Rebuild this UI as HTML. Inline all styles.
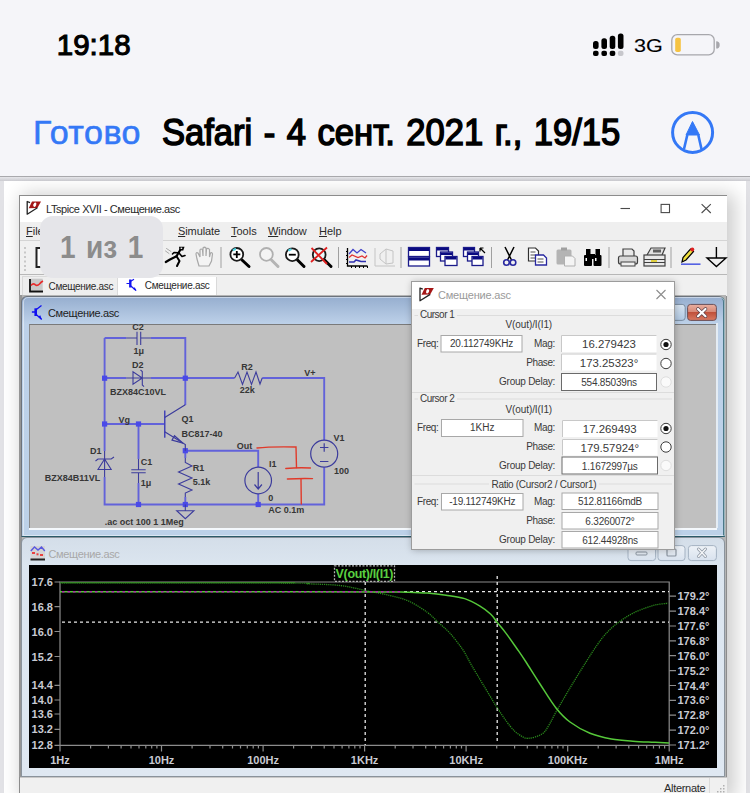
<!DOCTYPE html>
<html><head><meta charset="utf-8">
<style>
*{margin:0;padding:0;box-sizing:border-box}
html,body{width:750px;height:793px;overflow:hidden;background:#f5f5f9;font-family:"Liberation Sans",sans-serif}
.a{position:absolute}
.t{position:absolute;white-space:nowrap;line-height:1}
svg{position:absolute;overflow:visible}
</style></head><body>
<!-- iOS status bar -->
<div class="t" style="left:56.8px;top:30px;font-size:29.5px;color:#000;-webkit-text-stroke:1.1px #000;transform:scaleX(1.0);transform-origin:0 0">19:18</div>
<svg style="left:0;top:0" width="750" height="180">
 <g fill="#000">
  <rect x="593" y="41" width="5.6" height="8" rx="2.5"/><rect x="593" y="50.8" width="5.6" height="5.2" rx="2"/>
  <rect x="601.4" y="38.2" width="5.6" height="10.8" rx="2.5"/><rect x="601.4" y="50.8" width="5.6" height="5.2" rx="2"/>
  <rect x="609.7" y="35.8" width="5.6" height="13.2" rx="2.5"/><rect x="609.7" y="50.8" width="5.6" height="5.2" rx="2"/>
  <rect x="617.9" y="33.4" width="5.6" height="15.6" rx="2.5"/><rect x="617.9" y="50.8" width="5.6" height="5.2" rx="2" fill="#c7c7cc"/>
 </g>
 <rect x="671.8" y="34.7" width="42.4" height="20.2" rx="5.5" fill="none" stroke="#a7a7ac" stroke-width="1.3"/>
 <rect x="675.2" y="37.7" width="5.6" height="14.3" rx="1.8" fill="#f6c342"/>
 <path d="M716.2 41.3 a3.5 3.6 0 0 1 0 7.2 z" fill="#a7a7ac"/>
 <circle cx="692.6" cy="132.4" r="20" fill="none" stroke="#3478f6" stroke-width="3"/>
 <path d="M692.5 121.5 L699.5 135 L686 135 Z" fill="#3478f6" stroke="#3478f6" stroke-width="1" stroke-linejoin="round"/>
 <path d="M687.3 135 L684 149 M698.3 135 L701.5 149" stroke="#3478f6" stroke-width="2.6" fill="none"/>
</svg>
<div class="t" style="left:634px;top:37px;font-size:18px;color:#000;transform:scaleX(1.2);transform-origin:0 0;-webkit-text-stroke:0.1px #000">3G</div>
<!-- nav -->
<div class="t" style="left:33px;top:115px;font-size:34px;color:#3478f6;letter-spacing:0.5px;-webkit-text-stroke:0.6px #3478f6">Готово</div>
<div class="t" style="left:162px;top:115px;font-size:36px;color:#000;word-spacing:2px;-webkit-text-stroke:1.5px #000;transform:scaleX(0.96);transform-origin:0 0">Safari - 4 сент. 2021 г., 19/15</div>
<!-- separator -->
<div class="a" style="left:0;top:176px;width:750px;height:1px;background:#a9a9ad"></div>
<div class="a" style="left:0;top:177px;width:750px;height:616px;background:#e2e2e6"></div><div class="a" style="left:0;top:177px;width:750px;height:4px;background:linear-gradient(#e6e6ea,#cbcbd0)"></div>
<div class="a" style="left:4px;top:181px;width:742px;height:612px;background:#fff"></div>
<!-- LTspice window -->
<div class="a" style="left:19px;top:195px;width:708px;height:600px;box-shadow:5px 2px 18px 3px rgba(0,0,0,0.2)"></div>
<div class="a" style="left:19px;top:195px;width:708px;height:598px;background:#f0f0f0;border:1px solid #8c8c8c;border-bottom:none"></div>
<div class="a" style="left:20px;top:196px;width:707px;height:26px;background:#fff"></div>
<svg style="left:0;top:0" width="750" height="240" viewBox="0 0 750 240">
<g transform="translate(-392.8,-86.6)">
 <path d="M421.5 294.8 L424.8 288 H433.8 L430.2 294.6 Z" fill="#a41616"/>
 <ellipse cx="427.6" cy="291.3" rx="1.4" ry="2.3" fill="#fff" transform="rotate(20 427.6 291.3)"/>
 <path d="M423.6 288.3 L425.2 288.3" stroke="#fff" stroke-width="0"/>
 <path d="M422.8 289.2 L420 288.1 V300.8 L430.2 294.4" fill="none" stroke="#222" stroke-width="1.3" stroke-linejoin="round"/>
</g>
 <path d="M620.5 208.5 H630" stroke="#4a4a4a" stroke-width="1.1"/>
 <rect x="661.1" y="204.4" width="8.4" height="8.2" fill="none" stroke="#4a4a4a" stroke-width="1.1"/>
 <path d="M701.6 204.2 L710.8 213 M710.8 204.2 L701.6 213" stroke="#4a4a4a" stroke-width="1.1"/>
</svg>
<div class="t" style="left:46px;top:203.5px;font-size:11px;color:#2a2a2a;letter-spacing:-0.42px">LTspice XVII - Смещение.asc</div>
<!-- menubar -->
<div class="a" style="left:20px;top:222px;width:707px;height:18.5px;background:#efefef;border-bottom:1px solid #d4d4d4"></div>
<div class="t" style="left:26px;top:226px;font-size:11px;color:#2a2a2a"><u>F</u>ile</div>
<div class="t" style="left:178px;top:226px;font-size:11px;color:#2a2a2a;letter-spacing:-0.1px"><u>S</u>imulate</div>
<div class="t" style="left:231px;top:226px;font-size:11px;color:#2a2a2a"><u>T</u>ools</div>
<div class="t" style="left:268px;top:226px;font-size:11px;color:#2a2a2a;letter-spacing:-0.1px"><u>W</u>indow</div>
<div class="t" style="left:319px;top:226px;font-size:11px;color:#2a2a2a"><u>H</u>elp</div>
<!-- toolbar -->
<div class="a" style="left:20px;top:241px;width:707px;height:34px;background:#f0f0f0;border-bottom:1px solid #b8b8b8"></div>
<svg style="left:0;top:0" width="750" height="300" viewBox="0 0 750 300">
 <!-- grip -->
 <g fill="#c8c8c8"><rect x="24" y="247" width="2" height="2"/><rect x="24" y="251.5" width="2" height="2"/><rect x="24" y="256" width="2" height="2"/><rect x="24" y="260.5" width="2" height="2"/><rect x="24" y="265" width="2" height="2"/><rect x="24" y="269" width="2" height="2"/></g>
 <rect x="36.5" y="248" width="14" height="19" fill="#fff" stroke="#222" stroke-width="2"/>
 <!-- running man -->
 <g stroke="#000" stroke-linecap="round" stroke-linejoin="round" fill="none">
  <path d="M180.5 249.5 L176.5 256.2 L170 259.5 L165.8 262" stroke-width="2.2"/>
  <path d="M176.5 256.2 L179.5 261 L177 266" stroke-width="2"/>
  <path d="M179 253 L182 256.5 L185 255.5" stroke-width="1.6"/>
  <path d="M178.5 252.8 L174 252.5 L172.5 254" stroke-width="1.6"/>
  <path d="M166.5 248.5 L171 251.5 M165.5 251 L169 253.5" stroke="#a0a0a0" stroke-width="0.9"/>
 </g>
 <path d="M179 246.8 h5.5 l-1.2 3.8 h-3.8 z" fill="#000"/>
 <rect x="180.6" y="247.6" width="1.6" height="1.3" fill="#fff"/>
 <!-- hand -->
 <path d="M199 266 L197 259 L196 254 Q196 252 198 253 L200 257 L200 250 Q201 248 202.5 250 L203 256 L203 248 Q204.5 246.5 206 248 L206 256 L206.5 249 Q208 247.5 209.5 249.5 L209.5 257 L210.5 253 Q212 252 212.5 254 L211.5 261 L209 266 Z" fill="#f4f4f4" stroke="#a8a8a8" stroke-width="1.2"/>
 <rect x="220.5" y="247" width="1" height="21" fill="#a0a0a0"/>
 <!-- zoom in -->
 <line x1="242" y1="260" x2="249" y2="266.5" stroke="#000" stroke-width="3" stroke-linecap="round"/>
 <circle cx="236.8" cy="254.4" r="6.4" fill="#fff" stroke="#1a1a1a" stroke-width="1.8"/>
 <path d="M233 250.5 a5 5 0 0 1 3 -1.5" stroke="#50d8e8" stroke-width="2" fill="none"/>
 <path d="M233.3 254.4 h7 M236.8 250.9 v7" stroke="#000" stroke-width="1.8"/>
 <!-- zoom full gray -->
 <line x1="271.5" y1="260" x2="278" y2="266.5" stroke="#b4b4b4" stroke-width="3" stroke-linecap="round"/>
 <circle cx="266.4" cy="254.4" r="6.4" fill="#f4f4f4" stroke="#b0b0b0" stroke-width="1.8"/>
 <!-- zoom out -->
 <line x1="297.5" y1="260" x2="304" y2="266.5" stroke="#000" stroke-width="3" stroke-linecap="round"/>
 <circle cx="292.3" cy="254.7" r="6.4" fill="#fff" stroke="#1a1a1a" stroke-width="1.8"/>
 <path d="M288.5 250.8 a5 5 0 0 1 3 -1.5" stroke="#50d8e8" stroke-width="2" fill="none"/>
 <path d="M288.8 254.7 h7" stroke="#000" stroke-width="1.8"/>
 <!-- zoom cancel -->
 <line x1="324.5" y1="260" x2="331" y2="266.5" stroke="#000" stroke-width="3" stroke-linecap="round"/>
 <circle cx="319.2" cy="254.7" r="6.4" fill="#e8fbfd" stroke="#1a1a1a" stroke-width="1.8"/>
 <path d="M311.5 248 L327 264 M327 247.5 L311 262" stroke="#e02020" stroke-width="1.8"/>
 <rect x="338" y="247" width="1" height="21" fill="#a0a0a0"/>
 <!-- chart -->
 <path d="M347.5 248 V266 H367.5" stroke="#000" stroke-width="1.3" fill="none"/>
 <g fill="#000"><rect x="346" y="251" width="2" height="1"/><rect x="346" y="255" width="2" height="1"/><rect x="346" y="259" width="2" height="1"/><rect x="346" y="263" width="2" height="1"/><rect x="351" y="266" width="1" height="2"/><rect x="355" y="266" width="1" height="2"/><rect x="359" y="266" width="1" height="2"/><rect x="363" y="266" width="1" height="2"/><rect x="367" y="266" width="1" height="2"/></g>
 <path d="M349 254 L353 249.5 L357 253 L361 249.5 L366 253" stroke="#4040c8" stroke-width="1.3" fill="none"/>
 <path d="M349 257.5 L352 255 L358 257.5 L362 256 L365 258 L367 255.5" stroke="#e03030" stroke-width="1.3" fill="none"/>
 <path d="M349 262 L354 262 L356 260 L361 261.5 L366 261.5" stroke="#3030b0" stroke-width="1.6" fill="none"/>
 <!-- gray icon -->
 <g stroke="#c4c4c4" stroke-width="1" fill="none"><path d="M375 248 V266 H395"/><path d="M380 254 L386 249 L393 251 L393 263 L386 264 L380 259 Z"/><path d="M386 249 V264"/></g>
 <rect x="400.5" y="247" width="1" height="21" fill="#a0a0a0"/>
 <!-- tile -->
 <g stroke="#1a1a8a" stroke-width="1.3" fill="#fff">
  <rect x="408.5" y="247.5" width="21" height="9"/><rect x="408.5" y="257" width="21" height="9"/>
 </g>
 <rect x="409" y="248" width="20" height="3" fill="#0a0a80"/><rect x="409" y="257.5" width="20" height="3" fill="#0a0a80"/>
 <!-- cascade -->
 <g stroke="#1a1a8a" stroke-width="1.3" fill="#fff">
  <rect x="436.5" y="247.5" width="12" height="9"/><rect x="440.5" y="252" width="12" height="9"/><rect x="445" y="256.5" width="12" height="9"/>
 </g>
 <rect x="437" y="248" width="11" height="2.5" fill="#0a0a80"/><rect x="441" y="252.5" width="11" height="2.5" fill="#0a0a80"/><rect x="445.5" y="257" width="11" height="2.5" fill="#0a0a80"/>
 <!-- arrange -->
 <g stroke="#1a1a8a" stroke-width="1.3" fill="#fff">
  <rect x="463.5" y="247.5" width="11" height="9"/><rect x="467.5" y="252" width="11" height="9"/><rect x="472" y="256.5" width="11" height="9"/>
 </g>
 <rect x="464" y="248" width="10" height="2.5" fill="#0a0a80"/><rect x="468" y="252.5" width="10" height="2.5" fill="#0a0a80"/><rect x="472.5" y="257" width="10" height="2.5" fill="#0a0a80"/>
 <path d="M480 248 L485 253 M480 248 h3.5 M480 248 v3.5" stroke="#000" stroke-width="1.2" fill="none"/>
 <rect x="491" y="247" width="1" height="21" fill="#a0a0a0"/>
 <!-- scissors -->
 <path d="M505 247 L511.5 260 M514 247 L507.5 260" stroke="#000" stroke-width="1.5"/>
 <circle cx="506.5" cy="262.5" r="2.8" fill="none" stroke="#2828a0" stroke-width="1.6"/>
 <circle cx="513" cy="262.5" r="2.8" fill="none" stroke="#2828a0" stroke-width="1.6"/>
 <!-- copy -->
 <path d="M528.5 248 h7 l3 3 v10 h-10 z" fill="#fff" stroke="#303030" stroke-width="1.2"/>
 <path d="M530.5 252 h5 M530.5 255 h5 M530.5 258 h5" stroke="#505050" stroke-width="1"/>
 <path d="M535.5 255 h8 l3 3 v7 h-11 z" fill="#fff" stroke="#2828a0" stroke-width="1.3"/>
 <path d="M537.5 259 h6 M537.5 262 h6" stroke="#505050" stroke-width="1"/>
 <!-- paste gray -->
 <rect x="556.5" y="249.5" width="15" height="15" rx="1.5" fill="#b4b4b4"/>
 <rect x="561" y="247.5" width="6" height="3" fill="#a0a0a0"/>
 <path d="M564.5 256 h8 l2.5 2.5 v7.5 h-10.5 z" fill="#f4f4f4" stroke="#b0b0b0" stroke-width="1"/>
 <!-- binoculars -->
 <g fill="#000">
  <rect x="584" y="255" width="8" height="11" rx="1"/><rect x="593.5" y="255" width="8" height="11" rx="1"/>
  <rect x="586" y="249" width="4.5" height="7"/><rect x="595.5" y="249" width="4.5" height="7"/>
  <rect x="590" y="254" width="5" height="5"/>
 </g>
 <g fill="#fff"><rect x="585.5" y="258" width="1.5" height="3"/><rect x="595" y="258" width="1.5" height="3"/></g>
 <rect x="608.5" y="247" width="1" height="21" fill="#a0a0a0"/>
 <!-- printer 1 -->
 <path d="M623 256 V249 h9 l2 2 v5" fill="#e8e8e8" stroke="#404040" stroke-width="1.2"/>
 <rect x="618.5" y="256" width="19" height="8" rx="2" fill="#d8d8d8" stroke="#404040" stroke-width="1.2"/>
 <rect x="621" y="262" width="14" height="4" fill="#f0f0f0" stroke="#404040" stroke-width="1"/>
 <!-- printer 2 -->
 <path d="M647 255 L651 248 h14 l-3 7" fill="#e0e0e0" stroke="#404040" stroke-width="1.2"/>
 <rect x="653" y="249.5" width="8" height="3" fill="#606060"/>
 <rect x="644" y="255" width="21" height="11" fill="#e8e8e8" stroke="#404040" stroke-width="1.2"/>
 <path d="M644 259.5 h21 M644 262.5 h21" stroke="#404040" stroke-width="1"/>
 <rect x="651" y="260" width="6" height="2" fill="#e0d040"/>
 <rect x="670.5" y="247" width="1" height="21" fill="#a0a0a0"/>
 <!-- pencil -->
 <path d="M682 262 L683 257.5 L690.5 249 L693.5 251.5 L686 260 Z" fill="#f0e040" stroke="#000" stroke-width="1.2"/>
 <circle cx="692.3" cy="249.6" r="2" fill="#e02020"/>
 <rect x="681" y="263.5" width="19.5" height="1.3" fill="#3040e0"/>
 <!-- ground -->
 <path d="M716.4 247 V258 M707 258 H726 L716.4 266.5 Z" stroke="#000" stroke-width="1.4" fill="none"/>
</svg>
<!-- tab strip -->
<div class="a" style="left:20px;top:275px;width:707px;height:21px;background:#f0f0f0"></div>
<div class="a" style="left:22px;top:276px;width:96px;height:19px;background:#eeeeee;border:1px solid #dadada;border-bottom:none"></div>
<div class="a" style="left:117.5px;top:277px;width:99px;height:18px;background:#fff;border-right:1px solid #dadada"></div>
<div class="t" style="left:48.5px;top:281.5px;font-size:10px;color:#2a2a2a;letter-spacing:-0.3px">Смещение.asc</div>
<div class="t" style="left:144.8px;top:280.5px;font-size:10px;color:#2a2a2a;letter-spacing:-0.3px">Смещение.asc</div>
<svg style="left:0;top:0" width="750" height="330" viewBox="0 0 750 330">
 <rect x="31" y="278.7" width="11.7" height="11.6" fill="#c8c8c8"/>
 <path d="M30 279 V291.5 H43" fill="none" stroke="#111" stroke-width="1.8"/>
 <path d="M31 285.5 Q33 283 35 284.5 Q37 286.5 39.5 284 Q41 282 43 281" fill="none" stroke="#e82a2a" stroke-width="1.6"/>
 <g stroke="#1414f0" fill="none">
  <path d="M130.3 279.5 V287.5" stroke-width="2.4"/>
  <path d="M126.5 283.5 H130.3 M130.3 281.5 L134 279.3 M130.3 285.5 L136 290.5" stroke-width="1.2"/>
 </g>
 <path d="M133 288.8 L136.5 291 L134.8 287.3 Z" fill="#1414f0"/>
</svg>
<!-- MDI -->
<div class="a" style="left:20px;top:295px;width:706px;height:482px;background:#b4b4b4"></div><div class="a" style="left:19px;top:295px;width:2.5px;height:482px;background:#959595"></div>
<!-- schematic window -->
<div class="a" style="left:21px;top:295.5px;width:704px;height:241px;background:linear-gradient(#96aecf,#bdd1e9 27px,#bcd1e8);border:1px solid #6c737c;border-right:2px solid #4a7888;border-bottom:1.5px solid #2a5a68;border-radius:6px 6px 0 0"></div>
<div class="a" style="left:22.5px;top:296.5px;width:702px;height:239px;border:1px solid rgba(255,255,255,0.45);border-radius:5px 5px 0 0"></div>
<div class="t" style="left:48px;top:308px;font-size:11px;color:#1e1e1e;letter-spacing:-0.35px">Смещение.asc</div>
<svg style="left:0;top:0" width="750" height="330" viewBox="0 0 750 330">
 <g stroke="#1010f0" fill="none">
  <path d="M35.7 308.3 V316" stroke-width="2.6"/>
  <path d="M31.9 312 H35.7 M35.7 310 L41.5 305.4 M35.7 314 L41.7 319.4" stroke-width="1.3"/>
 </g>
 <path d="M38 316.8 L41.9 319.6 L40.3 315.2 Z" fill="#1010f0"/>
 <rect x="687.6" y="304.4" width="28.8" height="16" rx="3" fill="url(#rb)" stroke="#6a5058" stroke-width="1"/>
 <defs><linearGradient id="rb" x1="0" y1="0" x2="0" y2="1"><stop offset="0" stop-color="#eab0a0"/><stop offset="0.45" stop-color="#d88a78"/><stop offset="0.5" stop-color="#c0503a"/><stop offset="1" stop-color="#d87a62"/></linearGradient>
 <linearGradient id="bb" x1="0" y1="0" x2="0" y2="1"><stop offset="0" stop-color="#d8e4f0"/><stop offset="0.5" stop-color="#c4d6ea"/><stop offset="1" stop-color="#b0c8e2"/></linearGradient></defs>
 <rect x="660" y="304.4" width="25.2" height="16" rx="3" fill="url(#bb)" stroke="#7a8ca0" stroke-width="1"/>
 <path d="M698 309 L705.5 316.2 M705.5 309 L698 316.2" stroke="#5a4048" stroke-width="3.6" stroke-linecap="round"/>
 <path d="M698 309 L705.5 316.2 M705.5 309 L698 316.2" stroke="#fff" stroke-width="2.2" stroke-linecap="round"/>
</svg>
<div class="a" style="left:29px;top:323.5px;width:687px;height:204px;background:#c0c0c0;border-top:1.5px solid #7a7a7a;border-left:1px solid #8a8a8a"></div><div class="a" style="left:716px;top:323px;width:2px;height:205px;background:#e4ecf4"></div>
<div class="a" style="left:28.5px;top:527.5px;width:688px;height:2px;background:#f4f8fc"></div>
<!-- plot window -->
<div class="a" style="left:21px;top:537px;width:704px;height:240px;background:linear-gradient(#d4dee9,#dbe5ef 27px,#dfe8f2);border:1px solid #8a939c;border-radius:6px 6px 0 0"></div>
<div class="t" style="left:48.5px;top:548.5px;font-size:11px;color:#a8a8a8;letter-spacing:-0.35px">Смещение.asc</div>
<svg style="left:0;top:0" width="750" height="793" viewBox="0 0 750 793">
 <rect x="30.5" y="546" width="14.5" height="14" fill="#d4d4d4"/>
 <path d="M30.8 551 L34.5 547 L38 550 L41.5 547 L44.8 551" fill="none" stroke="#5858e0" stroke-width="1.4"/>
 <g fill="#e84040"><rect x="32" y="552" width="3" height="2"/><rect x="36.5" y="553.3" width="2" height="2"/><rect x="40" y="554" width="3" height="2"/></g>
 <rect x="30.5" y="558.5" width="14.5" height="2" fill="#222"/>
 <defs><linearGradient id="gb" x1="0" y1="0" x2="0" y2="1"><stop offset="0" stop-color="#eef2f7"/><stop offset="1" stop-color="#d8e2ee"/></linearGradient></defs>
 <g fill="url(#gb)" stroke="#a4b2c2" stroke-width="1">
  <rect x="628" y="545.6" width="27.6" height="15" rx="3"/>
  <rect x="658" y="545.6" width="27" height="15" rx="3"/>
  <rect x="688.4" y="545.6" width="28" height="15" rx="3"/>
 </g>
 <rect x="636" y="552" width="11" height="3" rx="1" fill="none" stroke="#8a94a0" stroke-width="1"/>
 <rect x="667" y="549" width="9" height="7" rx="1" fill="none" stroke="#8a94a0" stroke-width="1.2"/>
 <path d="M698.5 549 L705.5 556.5 M705.5 549 L698.5 556.5" stroke="#8a94a0" stroke-width="3" stroke-linecap="round"/>
 <path d="M698.5 549 L705.5 556.5 M705.5 549 L698.5 556.5" stroke="#f4f6f8" stroke-width="1.6" stroke-linecap="round"/>
</svg>
<div class="a" style="left:29px;top:564.5px;width:687.5px;height:203.5px;background:#000"></div>
<!-- status bar -->
<div class="a" style="left:20px;top:776.5px;width:707px;height:17px;background:#f0f0f0;border-top:1px solid #c8c8c8"></div>
<div class="a" style="left:709px;top:778px;width:1px;height:15px;background:#dadada"></div>
<div class="t" style="left:664px;top:783px;font-size:11px;color:#2a2a2a;letter-spacing:-0.3px">Alternate</div>
<svg style="left:0;top:0" width="750" height="793" viewBox="0 0 750 793"><g fill="#b0b0b0"><rect x="723" y="785" width="1.5" height="1.5"/><rect x="720" y="788" width="1.5" height="1.5"/><rect x="723" y="788" width="1.5" height="1.5"/><rect x="717" y="791" width="1.5" height="1.5"/><rect x="720" y="791" width="1.5" height="1.5"/><rect x="723" y="791" width="1.5" height="1.5"/></g></svg>
<svg style="left:0;top:0" width="750" height="793" viewBox="0 0 750 793">
 <defs><clipPath id="cv"><rect x="29.5" y="324" width="687" height="203.5"/></clipPath></defs>
 <g clip-path="url(#cv)">
 <g stroke="#6262da" stroke-width="1.9" fill="none">
  <path d="M104.6 338 H126.3 M151 338 H185.3 V405"/>
  <path d="M104.6 338 V451 M104.6 477 V504.5 H324.2 V467.2 M324.2 440.2 V378 H262.2 M234.6 378 H151 M126.3 378 H104.6"/>
  <path d="M104.6 424 H164.7 M138.5 424 V459 M138.5 483 V504.5"/>
  <path d="M185.3 450.7 H258.2 V467 M258.2 494 V504.5"/>
  <path d="M185.3 450.7 V458 M185.3 497 V504.5"/>
 </g>
 <g fill="#4a4ae8">
  <rect x="102" y="375.6" width="5.2" height="5.2"/><rect x="182.7" y="375.6" width="5.2" height="5.2"/>
  <rect x="102" y="421.4" width="5.2" height="5.2"/><rect x="135.9" y="421.4" width="5.2" height="5.2"/>
  <rect x="135.9" y="501.9" width="5.2" height="5.2"/><rect x="182.7" y="501.9" width="5.2" height="5.2"/>
  <rect x="255.6" y="501.9" width="5.2" height="5.2"/><rect x="182.7" y="448.1" width="5.2" height="5.2"/>
 </g>
 <g stroke="#3c3c9c" stroke-width="1.1" fill="none">
  <!-- C2 -->
  <path d="M126.3 338 H137 M140.7 338 H151 M137 331.7 V345 M140.7 331.7 V345"/>
  <!-- D2 -->
  <path d="M126.3 378 H151 M133 371.7 V384.2 L142.3 378 Z M140.5 370 L142.3 371.5 V385 L144 386.7"/>
  <!-- D1 -->
  <path d="M104.6 451 V477 M98 469.5 H111.2 L104.6 459 Z M95.5 461 L98 459 H111.2 L114 457"/>
  <!-- C1 -->
  <path d="M138.5 459 V469.7 M138.5 472.5 V483 M131.3 469.7 H145.7 M131.3 472.7 H145.7"/>
  <!-- R1 -->
  <path d="M185.3 458 V462.5 L192 466 L178.5 472 L192 478 L178.5 484 L192 490 L185.3 493 V497"/>
  <!-- R2 -->
  <path d="M234.6 378 L238 372 L242.5 384.5 L247 372 L251.5 384.5 L256 372 L260 384 L262.2 378"/>
  <!-- ground -->
  <path d="M185.3 504.5 V510.7 M176.7 510.7 H193.9 L185.3 518.7 Z"/>
 </g>
 <!-- Q1 -->
 <rect x="164" y="410.5" width="1.5" height="27.2" fill="#4444b8"/>
 <g stroke="#3c3c9c" stroke-width="1.2" fill="none">
  <path d="M164.7 417.4 L185.3 404.8 M164.7 431.8 L185.3 444.6 V450.7"/>
  <path d="M174.5 435.8 L183 443.2 L172 440.2 Z"/>
 </g>
 <!-- I1 -->
 <circle cx="258.2" cy="480.5" r="13.3" fill="none" stroke="#3c3c9c" stroke-width="1.2"/>
 <path d="M258.2 472 V489 M254.5 484.5 L258.2 489 L261.9 484.5" stroke="#3c3c9c" stroke-width="1.2" fill="none"/>
 <!-- V1 -->
 <circle cx="324.2" cy="453.7" r="13.5" fill="none" stroke="#3c3c9c" stroke-width="1.2"/>
 <path d="M320 447.5 H328.4 M324.2 443.3 V451.7 M320 461.5 H328.4" stroke="#3c3c9c" stroke-width="1.2"/>
 <!-- red hand-drawn -->
 <g stroke="#e03a2a" stroke-width="1.4" fill="none" stroke-linecap="round">
  <path d="M257 448 Q270 446.5 296 447 L296.5 467.5"/>
  <path d="M285.8 468.5 Q298 467.3 310.4 468"/>
  <path d="M287.4 479 Q300 478.3 312.5 478.6"/>
  <path d="M301 479 L301.3 504"/>
 </g>
 <g font-family="Liberation Sans" font-size="9px" font-weight="bold" fill="#363636">
  <text x="132.3" y="330">C2</text>
  <text x="133.5" y="354">1μ</text>
  <text x="132" y="368.3">D2</text>
  <text x="110" y="395">BZX84C10VL</text>
  <text x="118.5" y="422.5">Vg</text>
  <text x="181.5" y="422">Q1</text>
  <text x="181.5" y="436.6">BC817-40</text>
  <text x="90" y="454.3">D1</text>
  <text x="44.7" y="481.3">BZX84B11VL</text>
  <text x="140.7" y="464.6">C1</text>
  <text x="140.7" y="485.5">1μ</text>
  <text x="192.7" y="471.3">R1</text>
  <text x="192.7" y="485.3">5.1k</text>
  <text x="104.7" y="524.6">.ac oct 100 1 1Meg</text>
  <text x="241.3" y="370.3">R2</text>
  <text x="239.8" y="393.3">22k</text>
  <text x="304.2" y="376.3">V+</text>
  <text x="333.4" y="441.3">V1</text>
  <text x="334" y="473.8">100</text>
  <text x="236.7" y="449">Out</text>
  <text x="269" y="467.3">I1</text>
  <text x="268.3" y="500.5">0</text>
  <text x="268.3" y="512.8">AC 0.1m</text>
 </g>
 </g>
</svg>
<svg style="left:0;top:0" width="750" height="793" viewBox="0 0 750 793">
 <clipPath id="pc"><rect x="29" y="565" width="687" height="203"/></clipPath><g clip-path="url(#pc)">
 <path d="M60 582 H669.2 V745.4 H60 Z" fill="none" stroke="#8c8c8c" stroke-width="1.2"/>
 <path d="M54.5 582.0 H60 M54.5 606.7 H60 M54.5 631.5 H60 M54.5 656.5 H60 M54.5 685.3 H60 M54.5 700.0 H60 M54.5 714.0 H60 M54.5 729.3 H60 M54.5 745.3 H60 M669.2 596.2 H676 M669.2 611.1 H676 M669.2 626.0 H676 M669.2 640.8 H676 M669.2 655.7 H676 M669.2 670.6 H676 M669.2 685.5 H676 M669.2 700.4 H676 M669.2 715.2 H676 M669.2 730.1 H676 M669.2 745.0 H676 M90.6 745.4 V748.5 M108.4 745.4 V748.5 M121.1 745.4 V748.5 M131.0 745.4 V748.5 M139.0 745.4 V748.5 M145.8 745.4 V748.5 M151.7 745.4 V748.5 M156.9 745.4 V748.5 M192.1 745.4 V748.5 M210.0 745.4 V748.5 M222.7 745.4 V748.5 M232.5 745.4 V748.5 M240.5 745.4 V748.5 M247.3 745.4 V748.5 M253.2 745.4 V748.5 M258.4 745.4 V748.5 M293.6 745.4 V748.5 M311.5 745.4 V748.5 M324.2 745.4 V748.5 M334.0 745.4 V748.5 M342.1 745.4 V748.5 M348.9 745.4 V748.5 M354.8 745.4 V748.5 M360.0 745.4 V748.5 M395.2 745.4 V748.5 M413.0 745.4 V748.5 M425.7 745.4 V748.5 M435.6 745.4 V748.5 M443.6 745.4 V748.5 M450.4 745.4 V748.5 M456.3 745.4 V748.5 M461.5 745.4 V748.5 M496.7 745.4 V748.5 M514.6 745.4 V748.5 M527.3 745.4 V748.5 M537.1 745.4 V748.5 M545.1 745.4 V748.5 M551.9 745.4 V748.5 M557.8 745.4 V748.5 M563.0 745.4 V748.5 M598.2 745.4 V748.5 M616.1 745.4 V748.5 M628.8 745.4 V748.5 M638.6 745.4 V748.5 M646.7 745.4 V748.5 M653.5 745.4 V748.5 M659.4 745.4 V748.5 M664.6 745.4 V748.5 M60.0 745.4 V751.5 M161.5 745.4 V751.5 M263.1 745.4 V751.5 M364.6 745.4 V751.5 M466.1 745.4 V751.5 M567.7 745.4 V751.5 M669.2 745.4 V751.5" stroke="#8c8c8c" stroke-width="1.2"/>
 <g stroke="#e8e8e8" stroke-width="1.3" stroke-dasharray="3 3" fill="none">
  <path d="M365.2 576 V745 M497.2 576 V742"/>
  <path d="M62 622.1 H669"/>
  <path d="M404 591.6 H669"/>
 </g>
 <path d="M60.0 582.8 C97.8 582.8 245.7 582.8 287.0 583.0 C328.3 583.2 299.2 583.4 308.0 583.8 C316.8 584.2 330.4 584.4 340.0 585.5 C349.6 586.6 357.2 588.8 365.5 590.5 C373.8 592.2 382.8 593.7 390.0 595.5 C397.2 597.3 402.5 598.3 408.7 601.1 C414.9 603.9 422.3 608.7 427.3 612.3 C432.3 615.9 434.8 619.2 438.5 622.6 C442.2 626.0 445.6 628.4 449.7 632.9 C453.8 637.4 459.1 644.2 462.8 649.7 C466.5 655.2 467.5 658.3 472.0 666.0 C476.5 673.7 485.8 689.0 490.0 696.0 C494.2 703.0 494.1 703.0 497.4 708.0 C500.7 713.0 506.4 721.6 510.0 726.0 C513.6 730.4 516.0 732.5 519.0 734.5 C522.0 736.5 524.2 738.4 528.0 738.3 C531.8 738.2 538.5 736.2 542.0 734.0 C545.5 731.8 546.7 728.7 549.0 725.0 C551.3 721.3 552.5 718.2 556.0 712.0 C559.5 705.8 565.0 696.3 570.0 688.0 C575.0 679.7 580.9 670.0 586.0 662.0 C591.1 654.0 596.5 645.6 600.7 640.0 C604.9 634.4 607.8 631.6 611.4 628.2 C615.0 624.8 618.6 622.2 622.2 619.7 C625.8 617.2 629.0 615.2 632.9 613.2 C636.8 611.2 641.8 609.3 645.7 607.9 C649.6 606.5 652.8 605.5 656.5 604.7 C660.2 603.9 666.2 603.5 668.2 603.2" fill="none" stroke="#2a8a1c" stroke-width="1.3" stroke-dasharray="1.2 0.9"/>
 <path d="M61 582.6 H295" stroke="#3a8a2a" stroke-width="1.2"/>
 <path d="M60.0 591.8 C100.0 591.8 245.0 591.8 300.0 591.8 C355.0 591.8 371.9 591.9 390.0 592.0 C408.1 592.1 402.5 592.0 408.7 592.2 C414.9 592.4 421.1 592.6 427.3 593.1 C433.5 593.6 439.8 594.3 446.0 595.2 C452.2 596.1 459.1 596.8 464.7 598.6 C470.3 600.4 475.2 603.2 479.6 605.8 C484.0 608.4 487.9 611.4 490.8 614.2 C493.8 617.0 494.8 619.5 497.3 622.6 C499.8 625.7 502.4 628.5 505.7 632.9 C509.0 637.2 513.6 643.9 517.0 648.7 C520.4 653.6 522.2 656.1 526.0 662.0 C529.8 667.9 535.0 676.3 540.0 684.0 C545.0 691.7 551.0 701.7 556.0 708.0 C561.0 714.3 564.3 717.8 570.0 722.0 C575.7 726.2 583.1 730.5 590.0 733.3 C596.9 736.1 604.2 737.7 611.4 739.0 C618.5 740.3 625.8 740.7 632.9 741.2 C640.0 741.8 648.3 742.0 654.3 742.3 C660.3 742.6 666.5 742.9 669.0 743.0" fill="none" stroke="#56c83a" stroke-width="1.5"/>
 <path d="M62 591.8 H402" stroke="#b020b0" stroke-width="1.4" stroke-dasharray="2.5 3" fill="none"/>
 <rect x="334.5" y="565.8" width="60" height="15.5" fill="#000" stroke="#b0b0b0" stroke-width="1.3" stroke-dasharray="2 1.5"/>
 <text x="335.6" y="578.3" font-family="Liberation Sans" font-size="12.5px" font-weight="bold" fill="#5ad040" letter-spacing="-0.35">V(out)/I(I1)</text>
 <g font-family="Liberation Sans" font-size="11px" font-weight="bold" fill="#c8cad2">
  <text x="53" y="586.0" text-anchor="end">17.6</text>
  <text x="53" y="610.7" text-anchor="end">16.8</text>
  <text x="53" y="635.5" text-anchor="end">16.0</text>
  <text x="53" y="660.5" text-anchor="end">15.2</text>
  <text x="53" y="689.3" text-anchor="end">14.4</text>
  <text x="53" y="704.0" text-anchor="end">14.0</text>
  <text x="53" y="718.0" text-anchor="end">13.6</text>
  <text x="53" y="733.3" text-anchor="end">13.2</text>
  <text x="53" y="749.3" text-anchor="end">12.8</text>
  <text x="677.5" y="600.2">179.2°</text>
  <text x="677.5" y="615.1">178.4°</text>
  <text x="677.5" y="630.0">177.6°</text>
  <text x="677.5" y="644.8">176.8°</text>
  <text x="677.5" y="659.7">176.0°</text>
  <text x="677.5" y="674.6">175.2°</text>
  <text x="677.5" y="689.5">174.4°</text>
  <text x="677.5" y="704.4">173.6°</text>
  <text x="677.5" y="719.2">172.8°</text>
  <text x="677.5" y="734.1">172.0°</text>
  <text x="677.5" y="749.0">171.2°</text>
  <text x="60.0" y="764" text-anchor="middle">1Hz</text>
  <text x="161.5" y="764" text-anchor="middle">10Hz</text>
  <text x="263.1" y="764" text-anchor="middle">100Hz</text>
  <text x="364.6" y="764" text-anchor="middle">1KHz</text>
  <text x="466.1" y="764" text-anchor="middle">10KHz</text>
  <text x="567.7" y="764" text-anchor="middle">100KHz</text>
  <text x="669.2" y="764" text-anchor="middle">1MHz</text>
 </g>
</g></svg>
<!-- dialog -->
<div class="a" style="left:405px;top:282px;width:277px;height:275px;box-shadow:0 0 7px rgba(0,0,0,0.28);left:412px;width:263px;height:268px"></div>
<div class="a" style="left:411px;top:281px;width:264px;height:269px;background:#f0f0f0;border:1px solid #9c9c9c"></div>
<div class="a" style="left:412px;top:282px;width:262px;height:27px;background:#fff"></div>
<svg style="left:0;top:0" width="750" height="600" viewBox="0 0 750 600">
<g transform="translate(0,0)">
 <path d="M421.5 294.8 L424.8 288 H433.8 L430.2 294.6 Z" fill="#a41616"/>
 <ellipse cx="427.6" cy="291.3" rx="1.4" ry="2.3" fill="#fff" transform="rotate(20 427.6 291.3)"/>
 <path d="M423.6 288.3 L425.2 288.3" stroke="#fff" stroke-width="0"/>
 <path d="M422.8 289.2 L420 288.1 V300.8 L430.2 294.4" fill="none" stroke="#222" stroke-width="1.3" stroke-linejoin="round"/>
</g>
 <path d="M656.5 290 L665.5 299 M665.5 290 L656.5 299" stroke="#8c8c8c" stroke-width="1.1"/>
 <!-- group lines -->
 <g stroke="#dcdcdc" stroke-width="1" fill="none">
  <path d="M414.5 315.5 H418 M457 315.5 H672"/>
  <path d="M412 392.5 H674"/>
  <path d="M414.5 399 H418 M457 399 H672"/>
  <path d="M412 475.5 H674"/>
  <path d="M414.5 484 H489 M599 484 H672"/>
 </g>
 <g fill="#fff" stroke="#a8a8a8" stroke-width="1">
  <rect x="441" y="335.5" width="81" height="16.5"/>
  <rect x="441.5" y="419.5" width="81.5" height="17"/>
  <rect x="441.5" y="493.5" width="81.5" height="16.5"/>
  <rect x="562" y="493" width="96" height="16.5"/>
  <rect x="562" y="512.5" width="96" height="16.5"/>
  <rect x="562" y="531.5" width="96" height="16.5"/>
 </g>
 <g fill="#fff">
  <rect x="561.5" y="335" width="95" height="17"/><rect x="561.5" y="353.5" width="95" height="17"/>
  <rect x="562" y="420" width="95.5" height="17"/><rect x="562" y="439" width="95.5" height="16.5"/>
 </g>
 <g stroke="#c8c8c8" stroke-width="1" fill="none">
  <path d="M561.5 352 V335.5 H656.5 M561.5 370.5 V354 H656.5"/>
  <path d="M562.5 437 V420.5 H657.5 M562.5 455.5 V439.5 H657.5"/>
 </g>
 <g fill="#fff" stroke="#6a6a6a" stroke-width="1">
  <rect x="561.5" y="373.5" width="95" height="17"/>
  <rect x="562" y="457" width="95.5" height="17"/>
 </g>
 <!-- radios -->
 <g stroke="#3c3c3c" stroke-width="1" fill="#fff">
  <circle cx="666" cy="344.5" r="5.2"/><circle cx="666" cy="363.5" r="5.2"/>
  <circle cx="666" cy="428.5" r="5.2"/><circle cx="666" cy="447" r="5.2"/>
 </g>
 <g stroke="#dedede" stroke-width="1" fill="#fafafa">
  <circle cx="666" cy="382" r="5.2"/><circle cx="666" cy="465.5" r="5.2"/>
 </g>
 <circle cx="666" cy="344.5" r="2.6" fill="#111"/><circle cx="666" cy="428.5" r="2.6" fill="#111"/>
</svg>
<div class="t" style="left:438px;top:290px;font-size:11px;color:#9a9a9a;letter-spacing:-0.2px">Смещение.asc</div>
<div style="position:absolute;left:0;top:0;font-size:10px;color:#3a3a3a">
 <div class="t" style="left:420px;top:310px;letter-spacing:-0.5px">Cursor 1</div>
 <div class="t" style="left:420px;top:393.5px;letter-spacing:-0.5px">Cursor 2</div>
 <div class="t" style="left:491.5px;top:480px;letter-spacing:-0.3px">Ratio (Cursor2 / Cursor1)</div>
 <div class="t" style="left:505.5px;top:320px;letter-spacing:-0.1px">V(out)/I(I1)</div>
 <div class="t" style="left:505.5px;top:405px;letter-spacing:-0.1px">V(out)/I(I1)</div>
 <div class="t" style="left:417px;top:338.5px;letter-spacing:-0.4px">Freq:</div>
 <div class="t" style="left:417px;top:423px;letter-spacing:-0.4px">Freq:</div>
 <div class="t" style="left:417px;top:497px;letter-spacing:-0.4px">Freq:</div>
 <div class="t" style="left:455px;width:100px;text-align:right;top:338.5px;letter-spacing:-0.3px">Mag:</div>
 <div class="t" style="left:455px;width:100px;text-align:right;top:357.5px;letter-spacing:-0.4px">Phase:</div>
 <div class="t" style="left:455px;width:100px;text-align:right;top:377px;letter-spacing:-0.25px">Group Delay:</div>
 <div class="t" style="left:455px;width:100px;text-align:right;top:423px;letter-spacing:-0.3px">Mag:</div>
 <div class="t" style="left:455px;width:100px;text-align:right;top:442px;letter-spacing:-0.4px">Phase:</div>
 <div class="t" style="left:455px;width:100px;text-align:right;top:460.5px;letter-spacing:-0.25px">Group Delay:</div>
 <div class="t" style="left:455px;width:100px;text-align:right;top:497px;letter-spacing:-0.3px">Mag:</div>
 <div class="t" style="left:455px;width:100px;text-align:right;top:516px;letter-spacing:-0.4px">Phase:</div>
 <div class="t" style="left:455px;width:100px;text-align:right;top:534.5px;letter-spacing:-0.25px">Group Delay:</div>
 <div class="t" style="left:441px;width:81px;text-align:center;top:338.5px;letter-spacing:-0.2px">20.112749KHz</div>
 <div class="t" style="left:441.5px;width:81.5px;text-align:center;top:423px">1KHz</div>
 <div class="t" style="left:441.5px;width:81.5px;text-align:center;top:497px;letter-spacing:-0.2px">-19.112749KHz</div>
 <div class="t" style="left:561.5px;width:95px;text-align:center;top:339px;font-size:11.4px">16.279423</div>
 <div class="t" style="left:561.5px;width:95px;text-align:center;top:358px;font-size:11.4px">173.25323°</div>
 <div class="t" style="left:561.5px;width:95px;text-align:center;top:378px;letter-spacing:-0.2px">554.85039ns</div>
 <div class="t" style="left:562px;width:95.5px;text-align:center;top:424px;font-size:11.4px">17.269493</div>
 <div class="t" style="left:562px;width:95.5px;text-align:center;top:443px;font-size:11.4px">179.57924°</div>
 <div class="t" style="left:562px;width:95.5px;text-align:center;top:461.5px;letter-spacing:-0.2px">1.1672997µs</div>
 <div class="t" style="left:562px;width:96px;text-align:center;top:497px;letter-spacing:-0.25px">512.81166mdB</div>
 <div class="t" style="left:562px;width:96px;text-align:center;top:516.5px;letter-spacing:-0.2px">6.3260072°</div>
 <div class="t" style="left:562px;width:96px;text-align:center;top:535.5px;letter-spacing:-0.2px">612.44928ns</div>
</div>
<!-- overlay -->
<div class="a" style="left:40px;top:216px;width:123px;height:62px;background:#e5e5e9;border-radius:13px"></div>
<div class="t" style="left:60px;top:231.5px;font-size:31.5px;font-weight:bold;color:#8c8c8c;transform:scaleX(0.89);transform-origin:0 0;word-spacing:3px">1 из 1</div>
</body></html>
